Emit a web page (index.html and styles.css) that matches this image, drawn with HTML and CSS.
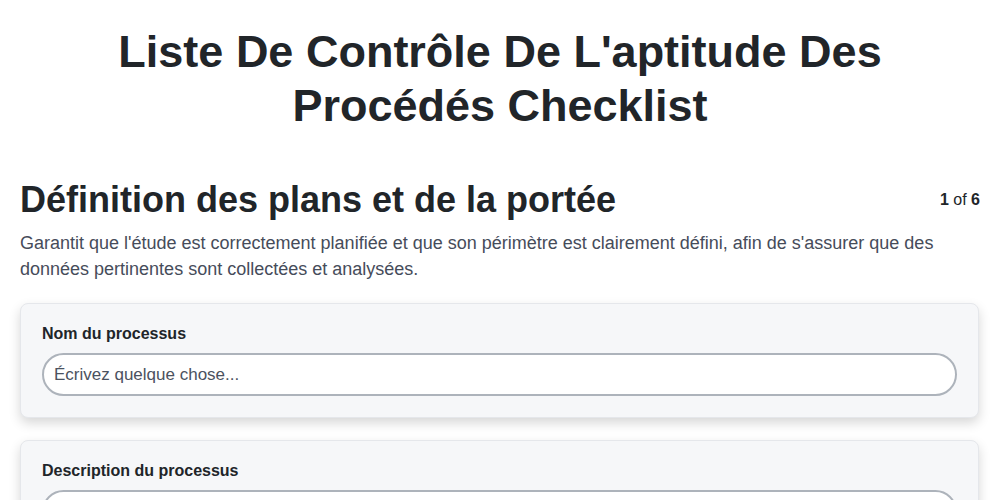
FILE: index.html
```html
<!DOCTYPE html>
<html lang="fr">
<head>
    <meta charset="UTF-8">
    <meta name="viewport" content="width=device-width, initial-scale=1.0">
    <title>Liste De Contrôle De L'aptitude Des Procédés Checklist</title>
    <link rel="stylesheet" href="styles.css">
</head>
<body>
    <div class="page">
        <h1 class="page-title">Liste De Contrôle De L'aptitude Des Procédés Checklist</h1>

        <!-- Section header -->
        <div class="section-head">
            <h2 class="section-title">Définition des plans et de la portée</h2>
            <span class="step"><b>1</b> of <b>6</b></span>
        </div>
        <p class="section-desc">Garantit que l'étude est correctement planifiée et que son périmètre est clairement défini, afin de s'assurer que des données pertinentes sont collectées et analysées.</p>

        <!-- Fields -->
        <div class="field-card">
            <label class="field-label" for="nom">Nom du processus</label>
            <input class="field-input" id="nom" type="text" placeholder="Écrivez quelque chose...">
        </div>
        <div class="field-card">
            <label class="field-label" for="desc">Description du processus</label>
            <input class="field-input" id="desc" type="text" placeholder="Écrivez quelque chose...">
        </div>
    </div>
</body>
</html>
```

FILE: styles.css
```css
/* Base */
body {
    margin: 0;
    font-family: "Liberation Sans", Arial, sans-serif;
    color: #212529;
    background-color: #fff;
}

.page {
    padding: 25px 20px 20px;
}

.page-title {
    font-size: 45px;
    line-height: 54px;
    font-weight: bold;
    text-align: center;
    margin: 0 auto 45px;
    max-width: 800px;
}

/* Section header */
.section-head {
    display: flex;
    justify-content: space-between;
    align-items: center;
}

.section-title {
    font-size: 36px;
    line-height: 44px;
    margin: 0;
}

.step {
    font-size: 16px;
}

.section-desc {
    font-size: 18px;
    line-height: 26px;
    color: #464c5a;
    margin: 8px 0 21px;
}

/* Field cards */
.field-card {
    background-color: #f6f7f9;
    border: 1px solid #e5e7eb;
    border-radius: 8px;
    padding: 21px 21px 21px;
    margin: 0 1px 22px 0;
    box-shadow: 0 5px 12px rgba(0, 0, 0, 0.16);
}

.field-label {
    display: block;
    font-size: 16px;
    font-weight: bold;
    line-height: 18px;
    margin-bottom: 10px;
}

.field-input {
    display: block;
    box-sizing: border-box;
    width: 100%;
    height: 43px;
    padding: 0 10px;
    border: 2px solid #adb3bb;
    border-radius: 22px;
    background-color: #fff;
    font-family: inherit;
    font-size: 17px;
    color: #212529;
}

.field-input::placeholder {
    color: #4b5260;
}
```
